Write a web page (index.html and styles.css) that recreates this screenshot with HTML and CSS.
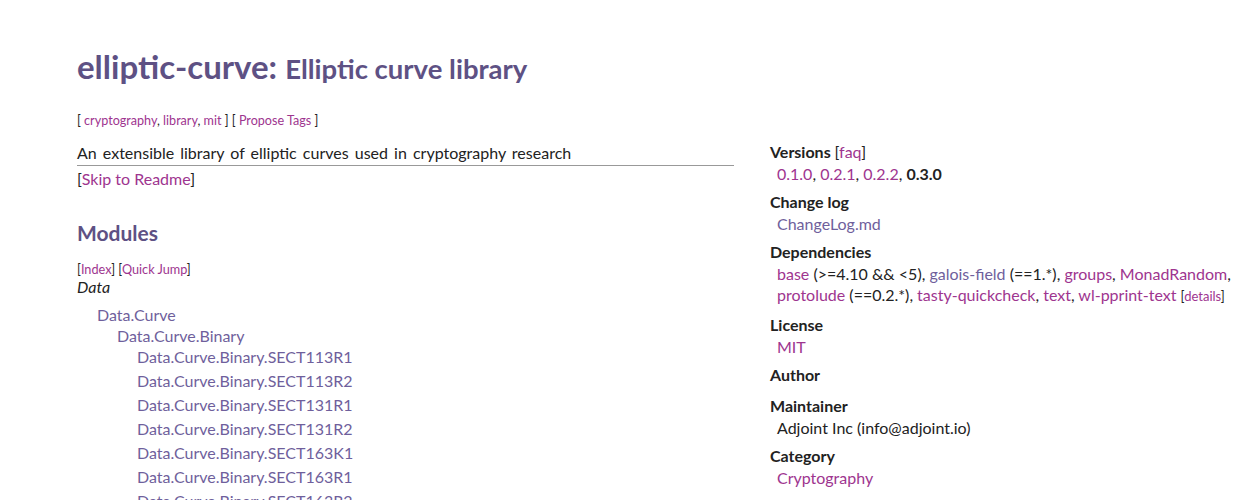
FILE: index.html
```html
<!DOCTYPE html>
<html>
<head>
<meta charset="utf-8">
<link rel="stylesheet" href="styles.css">
</head>
<body>
<div class="page">
  <h1 class="title"><a class="pkg" href="#">elliptic-curve</a>: <span class="synopsis">Elliptic curve library</span></h1>
  <div class="layout">
    <main class="main">
      <div class="tags">[ <a href="#">cryptography</a>, <a href="#">library</a>, <a href="#">mit</a> ] [ <a href="#">Propose Tags</a> ]</div>
      <p class="description">An extensible library of elliptic curves used in cryptography research</p>
      <p class="skip">[<a href="#">Skip to Readme</a>]</p>
      <h2 class="section">Modules</h2>
      <div class="modnav">[<a href="#">Index</a>] [<a href="#">Quick Jump</a>]</div>
      <div class="modgroup">Data</div>
      <ul class="mods lvl1">
        <li><a class="v" href="#">Data.Curve</a>
          <ul class="mods lvl2">
            <li><a class="v" href="#">Data.Curve.Binary</a>
              <ul class="mods lvl3">
                <li><a class="v" href="#">Data.Curve.Binary.SECT113R1</a></li>
                <li><a class="v" href="#">Data.Curve.Binary.SECT113R2</a></li>
                <li><a class="v" href="#">Data.Curve.Binary.SECT131R1</a></li>
                <li><a class="v" href="#">Data.Curve.Binary.SECT131R2</a></li>
                <li><a class="v" href="#">Data.Curve.Binary.SECT163K1</a></li>
                <li><a class="v" href="#">Data.Curve.Binary.SECT163R1</a></li>
                <li><a class="v" href="#">Data.Curve.Binary.SECT163R2</a></li>
              </ul>
            </li>
          </ul>
        </li>
      </ul>
    </main>
    <aside class="props">
      <div class="prop">
        <div class="pname">Versions <span class="faq">[<a href="#">faq</a>]</span></div>
        <div class="pval"><a href="#">0.1.0</a>, <a href="#">0.2.1</a>, <a href="#">0.2.2</a>, <strong>0.3.0</strong></div>
      </div>
      <div class="prop">
        <div class="pname">Change log</div>
        <div class="pval"><a class="v" href="#">ChangeLog.md</a></div>
      </div>
      <div class="prop">
        <div class="pname">Dependencies</div>
        <div class="pval deps"><a href="#">base</a> (&gt;=4.10 &amp;&amp; &lt;5), <a class="v" href="#">galois-field</a> (==1.*), <a href="#">groups</a>, <a href="#">MonadRandom</a>, <a href="#">protolude</a> (==0.2.*), <a href="#">tasty-quickcheck</a>, <a href="#">text</a>, <a href="#">wl-pprint-text</a> <span class="small">[<a href="#">details</a>]</span></div>
      </div>
      <div class="prop">
        <div class="pname">License</div>
        <div class="pval"><a href="#">MIT</a></div>
      </div>
      <div class="prop">
        <div class="pname">Author</div>
        <div class="pval empty"></div>
      </div>
      <div class="prop">
        <div class="pname">Maintainer</div>
        <div class="pval">Adjoint Inc (info@adjoint.io)</div>
      </div>
      <div class="prop">
        <div class="pname">Category</div>
        <div class="pval"><a href="#">Cryptography</a></div>
      </div>
    </aside>
  </div>
</div>
</body>
</html>
```
FILE: styles.css
```css
html, body {
  margin: 0;
  padding: 0;
  background: #fff;
}
body {
  font-family: "Lato", "Open Sans", "Noto Sans", sans-serif;
  font-size: 16px;
  color: #222;
}
a {
  color: #9e358f;
  text-decoration: none;
}
a.v {
  color: #6f5f9c;
}
.page {
  padding: 47px 0 0 77px;
}
.title {
  margin: 0;
  font-size: 33px;
  line-height: 38px;
  font-weight: bold;
  color: #5e5184;
}
.title .pkg {
  color: #5e5184;
}
.title .synopsis {
  font-size: 27.5px;
}
.layout {
  display: flex;
  gap: 36px;
  align-items: flex-start;
}
.main {
  width: 657px;
  flex: none;
}
.tags {
  margin-top: 25px;
  font-size: 12.6px;
  line-height: 16px;
}
.description {
  margin: 14px 0 0;
  line-height: 20px;
  padding-bottom: 2px;
  border-bottom: 1px solid #999;
  word-spacing: 2px;
}
.skip {
  margin: 3px 0 0;
  line-height: 20px;
}
.section {
  margin: 30px 0 0;
  font-size: 21px;
  line-height: 28px;
  color: #5e5184;
}
.modnav {
  margin-top: 14px;
  font-size: 12.7px;
  line-height: 16px;
}
.modgroup {
  margin-top: 0;
  font-style: italic;
  line-height: 20px;
}
.mods {
  list-style: none;
  margin: 0;
  padding: 0 0 0 20px;
}
.lvl1 {
  margin-top: 7px;
}
.lvl1 > li, .lvl2 > li {
  line-height: 21px;
}
.lvl3 {
  margin-top: -1px;
}
.lvl3 > li {
  line-height: 24px;
}
.props {
  flex: 1;
  padding-top: 54px;
}
.prop {
  margin-bottom: 8px;
}
.pname {
  font-weight: bold;
  line-height: 20px;
}
.faq {
  font-weight: normal;
}
.pval {
  margin-top: 1px;
  padding-left: 7px;
  line-height: 21px;
}
.pval.empty {
  height: 2px;
}
.small {
  font-size: 13px;
}
```
